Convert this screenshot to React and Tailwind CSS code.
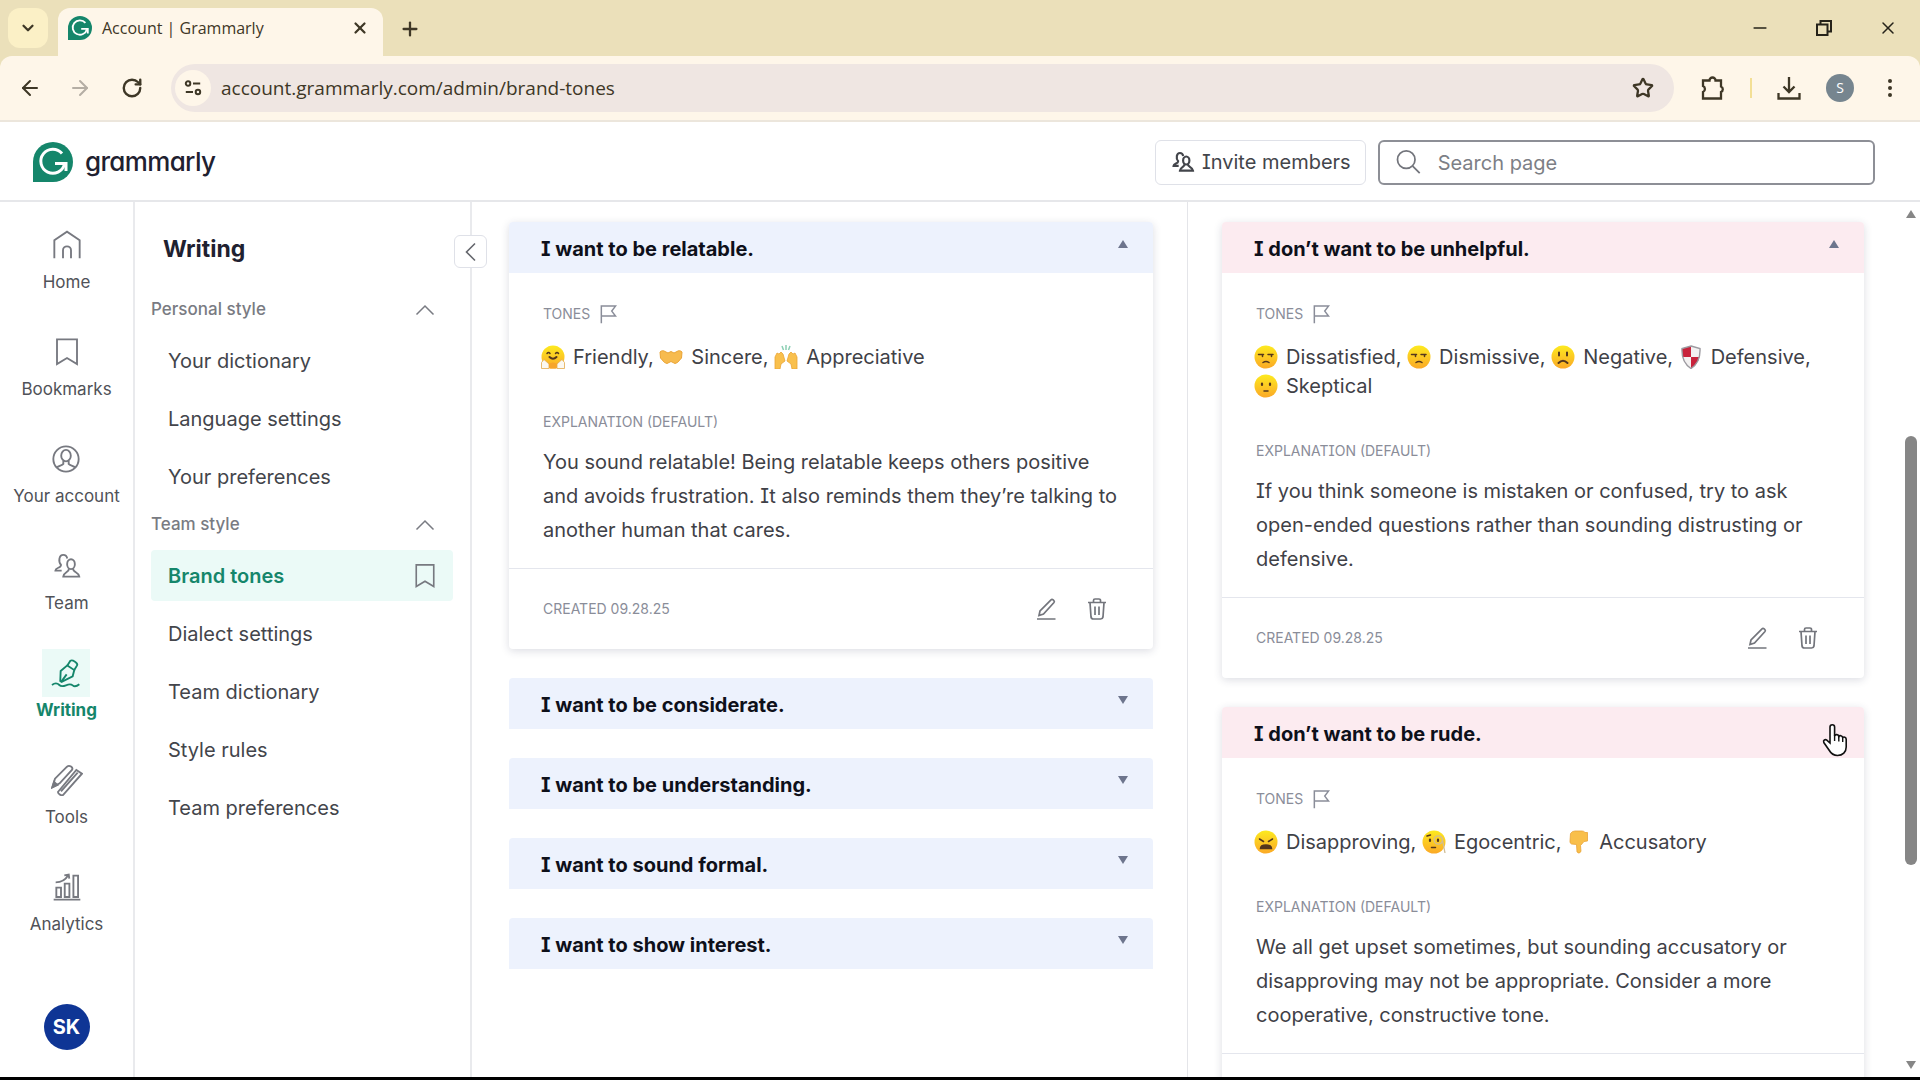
import { useState } from "react";
import { ArrowLeft, ArrowRight, ChevronDown, Minus, Plus, RotateCw, Star, X } from "lucide-react";

const GrammarlyMark = ({ className }) => (
  <svg viewBox="0 0 40 40" className={className} fill="none" aria-hidden="true">
    <path d="M20 0a20 20 0 1 1 0 40H0V20A20 20 0 0 1 20 0z" fill="#15866b" />
    <path d="M29 11.500A12 12 0 1 0 31.500 22" stroke="#fff" strokeWidth="3" />
    <path d="M22 21.500h11v7.500" stroke="#fff" strokeWidth="3" />
  </svg>
);

/* Line icons */

const Line = ({ children, className = "size-8", width = 1.4 }) => (
  <svg
    viewBox="0 0 24 24"
    className={className}
    fill="none"
    stroke="currentColor"
    strokeWidth={width}
    aria-hidden="true"
  >
    {children}
  </svg>
);

const HomeIcon = () => (
  <Line>
    <path d="M2.500 22V8.500L12 2l9.500 6.500V22M9 22v-6a3 3 0 0 1 6 0v6" />
  </Line>
);

const BookmarkIcon = ({ className }) => (
  <Line className={className}>
    <path d="M4.500 2.500h15V21L12 16.500 4.500 21z" />
  </Line>
);

const AccountIcon = () => (
  <Line>
    <circle cx="12" cy="12" r="9.500" />
    <ellipse cx="12" cy="9.500" rx="3.600" ry="4.300" />
    <path d="M5 18.500c1.500-1.600 4-1.500 5-2.800v-2.200M19 18.500c-1.500-1.600-4-1.500-5-2.800v-2.200" />
  </Line>
);

const TeamIcon = ({ className, width }) => (
  <Line className={className} width={width}>
    <path d="M8 15.500H3.300c.2-2.700 4.200-1.700 4.200-4.300C5.300 8.500 6 3.700 9.200 3.700c1.700 0 2.700 1.200 3 2.700" />
    <ellipse cx="15" cy="10.600" rx="2.900" ry="3.700" />
    <path d="M13.500 13.800c.2 3.200-4 2.600-4.300 6.200h12c-.4-3.600-4.900-3-4.700-6.200" />
  </Line>
);

const WritingIcon = () => (
  <Line>
    <path d="M13 6.300l5.200 3.500-1.200 4.700-8.300 4.200-1-.7.300-7.500z" />
    <path d="M13 6.300l2.300-3.500c1.500-1 6 1.700 5 3.500l-2.100 3.500M8.500 18.500l4-5.500" />
    <path d="M1.500 21c2.500-2 4.500-1 5.500 0s3 1 5 .2 4-.8 5 .1 3 .8 5-.8" />
  </Line>
);

const ToolsIcon = () => (
  <Line>
    <path d="M1 17.500l2-6.500L12 2c1.800-1.500 5 .5 3.700 2.500L6.500 14.500z" />
    <path d="M1 17.500l1.300-4 2.500 2.200z" fill="currentColor" />
    <path d="M5.200 21L19 4.500l4.200 2.800L9 23.300c-1 .7-3.800-.8-3.800-2.300zM7.500 20.500L20 6.500" />
  </Line>
);

const AnalyticsIcon = () => (
  <Line>
    <path d="M2 21.500h20M4 19.500v-7h3.500v7zM10.300 19.500V9.500h3.500v10zM16.800 19.500v-16h3.500v16z" />
    <path d="M3.500 8.500c4 0 7.500-2 9.500-5.500M10 3.300l3.300-.6.400 3" />
  </Line>
);

const FlagIcon = () => (
  <Line className="size-5" width={1.8}>
    <path d="M4 23V2.500h17l-4.500 6 4.500 6H4" />
  </Line>
);

const EditIcon = () => (
  <Line className="size-6" width={1.7}>
    <path d="M3 22h18.500M5 18.500l1-4.500L17 2.800c1.300-1.200 4.300 1 3 2.700L9.500 17z" />
  </Line>
);

const TrashIcon = () => (
  <Line className="size-6" width={1.7}>
    <path d="M3 5.500h18M5 5.500l1 14.500a2.500 2.500 0 0 0 2.500 2h7A2.500 2.500 0 0 0 18 20l1-14.500M8.500 5V3.500A1.500 1.500 0 0 1 10 2h4a1.500 1.500 0 0 1 1.500 1.500V5M10 9.500v8.500M14 9.500v8.500" />
  </Line>
);

const ChevronUpIcon = () => (
  <Line className="size-6" width={1.5}>
    <path d="M3.500 16.500L12 8l8.500 8.500" />
  </Line>
);

const Triangle = ({ down, className = "w-3 h-2" }) => (
  <svg viewBox="0 0 12 8" className={className} fill="currentColor" aria-hidden="true">
    <path d={down ? "M1 0h10L6 8z" : "M6 0l5 8H1z"} />
  </svg>
);

/* Tone emojis */

const Face = ({ children }) => (
  <>
    <defs>
      <linearGradient id="face" x1="0" y1="0" x2="0" y2="1">
        <stop offset="0" stopColor="#fdea1f" />
        <stop offset="1" stopColor="#fba927" />
      </linearGradient>
    </defs>
    <circle cx="12" cy="12" r="11.500" fill="url(#face)" />
    <g stroke="#54371d" strokeWidth="1.500" fill="none" strokeLinecap="round">
      {children}
    </g>
  </>
);

const EMOJIS = {
  hug: (
    <>
      <Face>
        <path d="M6 8.500q1.500-2 3 0M14.500 8.500q1.500-2 3 0" />
        <path d="M8.500 12q3.500 3.500 7 0" strokeWidth="2" />
      </Face>
      <path d="M.5 23.500v-6l2.500-3 5 4.500v4.500zM23.500 23.500v-6l-2.500-3-5 4.500v4.500z" fill="#fbf8f0" stroke="#e3ab4c" strokeWidth=".8" />
      <path d="M8.500 23.500l-.5-5 4-1 4 1-.5 5z" fill="#f7a52a" />
    </>
  ),
  hands: (
    <path
      d="M1 7c1.500-1.500 3.500-1.800 5-.5l3 1.500 3-1.500L15 8l3-1.500c1.500-1.300 3.500-1 5 .5l-.5 6-4 4.500-2.500 1-4-2-4 2-2.500-1-4-4.500z"
      fill="#f7bb4f"
      stroke="#eaa436"
    />
  ),
  raised: (
    <>
      <path d="M8 1l1.500 4M12 0v5M16 1l-1.500 4" stroke="#8ccfb4" strokeWidth="1.500" />
      <path d="M1 12l2-4 2 1 2-2 2 2 2 7-4 3-1 5H1zM23 12l-2-4-2 1-2-2-2 2-2 7 4 3 1 5h5z" fill="#f9c04d" stroke="#eaa436" strokeWidth=".8" />
    </>
  ),
  unamused: (
    <Face>
      <path d="M4.500 9.500h5M14 9.500h5M8.500 10v1.500M17.500 10v1.500M9 17.500q3-2 6 0" />
    </Face>
  ),
  frown: (
    <Face>
      <path d="M8 7.500v3M16 7.500v3M7.500 18q4.500-4.500 9 0" strokeWidth="2" />
    </Face>
  ),
  shield: (
    <>
      <path d="M12 1l9 2.500c.5 10-2.500 16-9 20-6.500-4-9.500-10-9-20z" fill="#f3f1f1" />
      <path d="M12 1v11H3.500Q2.800 8 3 3.500zM12 12h8.500q-2 7.500-8.500 11.500z" fill="#c8233c" />
      <path d="M12 1l9 2.500c.5 10-2.500 16-9 20-6.500-4-9.500-10-9-20z" fill="none" stroke="#9c9aa0" strokeWidth="1.400" />
    </>
  ),
  skeptical: (
    <Face>
      <path d="M8 9.500v1.500M16 9.500v1.500" strokeWidth="2.200" />
      <path d="M10 17h4" />
    </Face>
  ),
  angry: (
    <Face>
      <path d="M5.500 9l4 2.500M18.500 9l-4 2.500" />
      <path d="M6.500 18.500q0-3.500 5.500-3.500t5.500 3.500z" fill="#54371d" />
    </Face>
  ),
  monocle: (
    <>
      <Face>
        <path d="M8 9.500v1.500M16 9.500v1.500" strokeWidth="2.200" />
        <path d="M9.500 17.500h4M5 6l3.500-1" />
      </Face>
      <path d="M20.500 10a4.200 4.200 0 1 1-8.400 0 4.200 4.200 0 0 1 8.400 0l2.500 13" fill="none" stroke="#d0bd96" strokeWidth="1.300" />
    </>
  ),
  thumbsDown: (
    <path
      d="M3.500 3.500Q5 1 8 1h7q2 0 3 1.500h2.500v8.500l-3.500.5-3.500 4 .5 6q-2 3-4 .5l-.5-7.500-5-.5q-2-1-1.500-3z"
      fill="#f9bf4a"
      stroke="#e9a338"
      strokeWidth=".8"
    />
  ),
};

const Emoji = ({ name }) => (
  <svg viewBox="0 0 24 24" className="inline-block size-6 align-[-5px]" aria-hidden="true">
    {EMOJIS[name]}
  </svg>
);

const RAIL = [
  { label: "Home", icon: <HomeIcon /> },
  { label: "Bookmarks", icon: <BookmarkIcon /> },
  { label: "Your account", icon: <AccountIcon /> },
  { label: "Team", icon: <TeamIcon /> },
  { label: "Writing", icon: <WritingIcon />, active: true },
  { label: "Tools", icon: <ToolsIcon /> },
  { label: "Analytics", icon: <AnalyticsIcon /> },
];

const SECTIONS = [
  { title: "Personal style", items: ["Your dictionary", "Language settings", "Your preferences"] },
  {
    title: "Team style",
    items: ["Brand tones", "Dialect settings", "Team dictionary", "Style rules", "Team preferences"],
  },
];

const WANTED = [
  {
    title: "I want to be relatable.",
    tones: [
      ["hug", "Friendly"],
      ["hands", "Sincere"],
      ["raised", "Appreciative"],
    ],
    text: "You sound relatable! Being relatable keeps others positive and avoids frustration. It also reminds them they’re talking to another human that cares.",
  },
  { title: "I want to be considerate." },
  { title: "I want to be understanding." },
  { title: "I want to sound formal." },
  { title: "I want to show interest." },
];

const UNWANTED = [
  {
    title: "I don’t want to be unhelpful.",
    tones: [
      ["unamused", "Dissatisfied"],
      ["unamused", "Dismissive"],
      ["frown", "Negative"],
      ["shield", "Defensive"],
      ["skeptical", "Skeptical"],
    ],
    text: "If you think someone is mistaken or confused, try to ask open-ended questions rather than sounding distrusting or defensive.",
  },
  {
    title: "I don’t want to be rude.",
    tones: [
      ["angry", "Disapproving"],
      ["monocle", "Egocentric"],
      ["thumbsDown", "Accusatory"],
    ],
    text: "We all get upset sometimes, but sounding accusatory or disapproving may not be appropriate. Consider a more cooperative, constructive tone.",
    hovered: true,
  },
];

const HandCursor = () => (
  <svg viewBox="0 0 26 34" className="absolute right-4 top-4 z-10 w-[26px] h-[34px]" aria-hidden="true">
    <path
      d="M8 20V4a2.300 2.300 0 0 1 4.600 0v9c.6-2 4-1.800 4.200.6.800-1.600 3.700-1.200 3.900 1 1-1.200 3.500-.6 3.500 1.700V24c0 5-3.500 8.500-8.700 8.500-4.500 0-6.500-2-8.500-5.500L1.800 19.500c-1-2.200 1.500-3.600 3-2.300z"
      fill="#fff"
      stroke="#111"
      strokeWidth="1.600"
    />
    <path d="M12.600 12.500V18M16.800 13.500V18.500M20.700 14.500V19" stroke="#111" strokeWidth="1.400" />
  </svg>
);

const ToneCard = ({ card, negative }) => {
  const [open, setOpen] = useState(Boolean(card.text));

  return (
    <section className={`relative rounded ${open ? "bg-white shadow-[0_2px_9px_rgba(40,45,80,0.16)]" : ""}`}>
      <button
        type="button"
        onClick={() => setOpen(!open)}
        className={`flex w-full h-[51px] items-center justify-between pl-8 pr-6 rounded-t text-xl font-bold text-[#0e101a] ${
          negative ? "bg-[#fcebf0]" : "bg-[#edf2fd]"
        }`}
      >
        <span className="pt-0.5">{card.title}</span>
        <span className="pb-2 text-[#6d758d]">{!card.hovered && <Triangle down={!open} />}</span>
      </button>
      {card.hovered && <HandCursor />}

      {open && card.text && (
        <>
          <div className="px-[34px] pt-[31px] pb-[21px]">
            <h3 className="flex h-5 items-center gap-2 text-sm text-[#8a8d99]">
              TONES <FlagIcon />
            </h3>
            <p className="-ml-0.5 mt-[19px] text-xl leading-[29px] text-[#3f4147]">
              {card.tones.map(([emoji, name], i) => (
                <span key={name}>
                  <span className="whitespace-nowrap">
                    <Emoji name={emoji} />
                    <span className="pl-2">
                      {name}
                      {i < card.tones.length - 1 && ","}
                    </span>
                  </span>{" "}
                </span>
              ))}
            </p>
            <h3 className="mt-10 h-5 text-sm text-[#8a8d99]">EXPLANATION (DEFAULT)</h3>
            <p className="mt-[13px] text-xl leading-[34px] text-[#3f4147]">{card.text}</p>
          </div>
          <footer className="flex h-[81px] items-center border-t border-[#e4e6ed] pl-[34px] pr-11 text-sm text-[#8a8d99]">
            <span className="grow">CREATED 09.28.25</span>
            <button type="button" aria-label="Edit" className="mr-[27px] text-[#73757c]">
              <EditIcon />
            </button>
            <button type="button" aria-label="Delete" className="text-[#73757c]">
              <TrashIcon />
            </button>
          </footer>
        </>
      )}
    </section>
  );
};

const BrowserBar = () => (
  <div className="shrink-0 bg-[#ebe0ba] text-[#3e3726] font-['Open_Sans','Noto_Sans',sans-serif]">
    <div className="flex h-14 items-end">
      <button
        type="button"
        aria-label="Search tabs"
        className="ml-2 mb-2 mr-2.5 flex size-10 items-center justify-center rounded-xl bg-[#fbf0c6]"
      >
        <ChevronDown className="size-[18px]" strokeWidth={3} />
      </button>
      <div className="flex h-12 w-[325px] items-center rounded-t-xl bg-[#fef6e9] pl-2.5 pr-3.5 pb-2">
        <GrammarlyMark className="size-6" />
        <span className="grow pl-2.5 text-base">Account | Grammarly</span>
        <button type="button" aria-label="Close tab">
          <X className="size-[18px]" strokeWidth={3} />
        </button>
      </div>
      <button type="button" aria-label="New tab" className="ml-4 mb-4">
        <Plus className="size-[22px]" strokeWidth={2.500} />
      </button>
      <div className="ml-auto mr-[22px] mb-[18px] flex items-center gap-11 text-[#26231a]">
        <button type="button" aria-label="Minimize">
          <Minus className="size-5" />
        </button>
        <button type="button" aria-label="Restore">
          <svg viewBox="0 0 20 20" className="size-5" fill="none" stroke="currentColor" strokeWidth="2">
            <path d="M3 6.500h10.500V17H3zM6.500 6V3H17v10.500h-3" />
          </svg>
        </button>
        <button type="button" aria-label="Close window">
          <X className="size-5" strokeWidth={1.800} />
        </button>
      </div>
    </div>

    <div className="flex h-[66px] items-center border-b-2 border-[#ece6dc] rounded-t-xl bg-[#fef6e9] pl-[18px] pr-[18px]">
      <button type="button" aria-label="Back">
        <ArrowLeft className="size-6" />
      </button>
      <button type="button" aria-label="Forward" className="ml-[26px] text-[#b5aea4]">
        <ArrowRight className="size-6" />
      </button>
      <button type="button" aria-label="Reload" className="ml-[29px]">
        <RotateCw className="size-[22px]" strokeWidth={2.600} />
      </button>
      <div className="ml-7 flex h-12 grow items-center rounded-full bg-[#efe6e2] pl-1 pr-5">
        <button
          type="button"
          aria-label="Site information"
          className="flex size-9 items-center justify-center rounded-full bg-[#fef6e9]"
        >
          <svg viewBox="0 0 20 20" className="size-[18px]" fill="none" stroke="currentColor" strokeWidth="2.200">
            <circle cx="4.500" cy="5" r="2.500" />
            <path d="M10 5h8M2 14.500h8" />
            <circle cx="15.500" cy="14.500" r="2.500" />
          </svg>
        </button>
        <input
          aria-label="Address"
          defaultValue="account.grammarly.com/admin/brand-tones"
          className="grow bg-transparent pl-2.5 text-[19px] outline-none"
        />
        <button type="button" aria-label="Bookmark this page">
          <Star className="size-[22px]" strokeWidth={2.500} />
        </button>
      </div>
      <button type="button" aria-label="Extensions" className="ml-[26px]">
        <svg viewBox="0 0 26 26" className="size-[26px]" fill="none" stroke="currentColor" strokeWidth="2.300">
          <path d="M3 5.500h6.500a3 3 0 0 1 6 0H21v6a3 3 0 0 1 0 5.500v6.500H3V17a3.300 3.300 0 0 0 0-6z" />
        </svg>
      </button>
      <span className="mx-6 h-5 w-0.5 bg-[#f3df95]" />
      <button type="button" aria-label="Downloads">
        <svg viewBox="0 0 26 26" className="size-[26px]" fill="none" stroke="currentColor" strokeWidth="2.300">
          <path d="M13 2v15M7.500 11.500L13 17l5.500-5.500M2.500 18v5.500h21V18" />
        </svg>
      </button>
      <button
        type="button"
        aria-label="Profile"
        className="ml-6 size-7 rounded-full bg-[#76858f] text-sm text-white"
      >
        S
      </button>
      <button type="button" aria-label="Menu" className="ml-6">
        <svg viewBox="0 0 24 24" className="size-6" fill="currentColor">
          <circle cx="12" cy="5" r="2" />
          <circle cx="12" cy="12" r="2" />
          <circle cx="12" cy="19" r="2" />
        </svg>
      </button>
    </div>
  </div>
);

const App = () => (
  <div className="flex h-screen flex-col overflow-hidden border-b-[3px] border-black bg-white font-['Inter',sans-serif] text-[#43454b] [font-feature-settings:'cv08']">
    <BrowserBar />

    <header className="flex h-20 shrink-0 items-center border-b-2 border-[#e6e7ea] pl-[33px] pr-[45px] pt-0.5">
      <a href="#home" className="flex grow items-center gap-3 text-[#1f2130]">
        <GrammarlyMark className="size-10" />
        <span className="pb-0.5 text-[26px] font-medium tracking-tight [font-feature-settings:'cv11']">grammarly</span>
      </a>
      <button
        type="button"
        className="mr-3 flex h-[45px] items-center gap-1.5 rounded-md border border-[#dfe1e8] px-3.5 text-xl"
      >
        <TeamIcon className="size-[26px]" width={2} />
        Invite members
      </button>
      <label className="flex h-[45px] w-[27%] shrink-0 items-center gap-4 rounded-md border-2 border-[#8d8f96] pl-3.5 text-[#73757c]">
        <Line className="size-7" width={1.5}>
          <circle cx="10.500" cy="10" r="7.500" />
          <path d="M16 15.500l6 6" />
        </Line>
        <input
          type="search"
          aria-label="Search page"
          placeholder="Search page"
          className="min-w-0 grow bg-transparent pt-0.5 text-xl outline-none placeholder:text-[#7d7f86]"
        />
      </label>
    </header>

    <div className="flex min-h-0 grow">
      {/* Main rail */}
      <nav className="flex w-[135px] shrink-0 flex-col items-center gap-[34px] border-r-2 border-[#e9eaed] pt-[19px] pb-[27px]">
        {RAIL.map(({ label, icon, active }) => (
          <a
            key={label}
            href={`#${label}`}
            className={`flex flex-col items-center gap-0.5 text-[17px] leading-[23px] ${
              active ? "font-bold text-[#15866b]" : "text-[#505258]"
            }`}
          >
            <span
              className={`flex size-12 items-center justify-center ${active ? "bg-[#ebfaf7]" : "text-[#777980]"}`}
            >
              {icon}
            </span>
            <span className="whitespace-nowrap">{label}</span>
          </a>
        ))}
        <button type="button" className="mt-auto size-[46px] shrink-0 rounded-full bg-[#0f3595] text-xl font-bold text-white">
          SK
        </button>
      </nav>

      {/* Section menu */}
      <aside className="relative w-[337px] shrink-0 border-r-2 border-[#e9eaed] pl-4 pr-[17px] pt-8">
        <h2 className="pl-3 text-[23px] leading-[30px] font-bold text-[#1f2130]">Writing</h2>
        <button
          type="button"
          aria-label="Collapse menu"
          className="absolute -right-[17px] top-[33px] z-10 flex size-[33px] items-center justify-center rounded-md border border-[#dfe1e8] bg-white text-[#65676d]"
        >
          <Line className="size-6" width={1.6}>
            <path d="M16 3.500L7.500 12l8.500 8.500" />
          </Line>
        </button>
        <div className="mt-[31px] flex flex-col gap-2">
          {SECTIONS.map((section) => (
            <div key={section.title}>
              <button
                type="button"
                className="mb-2.5 flex h-[30px] w-full items-center justify-between pr-4 text-[17px] font-medium text-[#797b82]"
              >
                {section.title}
                <ChevronUpIcon />
              </button>
              <ul className="flex flex-col gap-[7px]">
                {section.items.map((item) => (
                  <li key={item}>
                    <a
                      href={`#${item}`}
                      className={`flex h-[51px] items-center justify-between rounded pl-[17px] pr-3.5 text-xl ${
                        item === "Brand tones" ? "bg-[#ebfaf7] font-semibold text-[#15866b]" : ""
                      }`}
                    >
                      {item}
                      {item === "Brand tones" && (
                        <span className="text-[#777980]">
                          <BookmarkIcon className="size-7" />
                        </span>
                      )}
                    </a>
                  </li>
                ))}
              </ul>
            </div>
          ))}
        </div>
      </aside>

      {/* Tone columns */}
      <main className="grid min-w-0 grow grid-cols-[716fr_710fr]">
        <div className="flex min-w-0 flex-col gap-[29px] border-r border-[#e4e5e9] pl-[37px] pr-[34px] pt-5">
          {WANTED.map((card) => (
            <ToneCard key={card.title} card={card} />
          ))}
        </div>
        <div className="flex min-h-0 min-w-0 flex-col gap-[29px] overflow-hidden px-[34px] pt-5">
          {UNWANTED.map((card) => (
            <ToneCard key={card.title} card={card} negative />
          ))}
        </div>
      </main>

      {/* Scrollbar */}
      <div className="flex w-[22px] shrink-0 flex-col items-center gap-1 py-2 pl-1 text-[#868686]">
        <Triangle />
        <div className="flex-[210]" />
        <div className="w-3 flex-[431] rounded-full bg-[#868686]" />
        <div className="flex-[188]" />
        <Triangle down />
      </div>
    </div>
  </div>
);

export default App;
